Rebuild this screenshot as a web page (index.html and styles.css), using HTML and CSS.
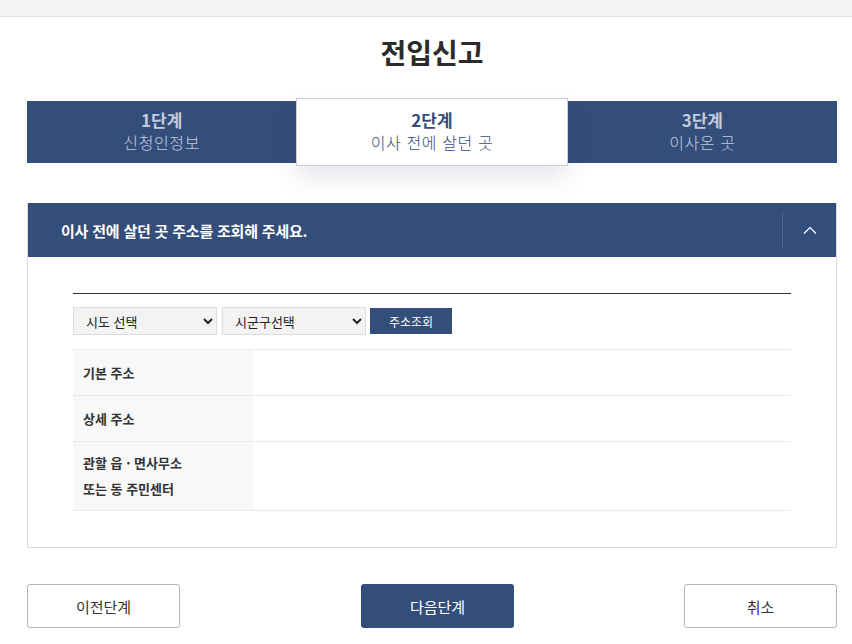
FILE: index.html
```html
<!DOCTYPE html>
<html lang="ko">
<head>
    <meta charset="UTF-8">
    <meta name="viewport" content="width=device-width, initial-scale=1.0">
    <title>전입신고</title>
    <link rel="stylesheet" href="styles.css">
</head>

<body>

<div class="top-bar"></div>

<div class="wrap">
    <h1 class="page-title">전입신고</h1>

    <div class="steps">
        <div class="step">
            <strong>1단계</strong>
            <span>신청인정보</span>
        </div>
        <div class="step active">
            <strong>2단계</strong>
            <span>이사 전에 살던 곳</span>
        </div>
        <div class="step">
            <strong>3단계</strong>
            <span>이사온 곳</span>
        </div>
    </div>

    <div class="panel">
        <div class="panel-head">
            <h2>이사 전에 살던 곳 주소를 조회해 주세요.</h2>
            <button class="toggle" type="button">
                <svg width="14" height="8" viewBox="0 0 14 8"><path d="M1 7.5 L7 1.5 L13 7.5" fill="none" stroke="#fff" stroke-width="1.2"/></svg>
            </button>
        </div>

        <div class="panel-body">
            <div class="search">
                <select class="sel">
                    <option>시도 선택</option>
                </select>
                <select class="sel">
                    <option>시군구선택</option>
                </select>
                <button class="btn-search" type="button">주소조회</button>
            </div>

            <table class="addr">
                <tr>
                    <th>기본 주소</th>
                    <td></td>
                </tr>
                <tr>
                    <th>상세 주소</th>
                    <td></td>
                </tr>
                <tr>
                    <th>관할 읍 · 면사무소<br>또는 동 주민센터</th>
                    <td></td>
                </tr>
            </table>
        </div>
    </div>

    <div class="actions">
        <button class="btn btn-line" type="button">이전단계</button>
        <button class="btn btn-primary" type="button">다음단계</button>
        <button class="btn btn-line" type="button">취소</button>
    </div>
</div>

</body>
</html>
```

FILE: styles.css
```css
/* Reset */
* {
    box-sizing: border-box;
    margin: 0;
    padding: 0;
    font-family: "Noto Sans CJK KR", "Noto Sans", sans-serif;
}

body {
    background: #fff;
    color: #333;
}

.top-bar {
    height: 17px;
    background: #f6f5f6;
    border-bottom: 1px solid #e4e4e4;
}

.wrap {
    width: 810px;
    margin-left: 27px;
}

.page-title {
    padding-top: 15px;
    font-size: 28px;
    line-height: 40px;
    font-weight: 700;
    text-align: center;
    color: #2b2b2b;
}

/* Steps */
.steps {
    display: flex;
    height: 62px;
    margin-top: 29px;
    background: #344e7b;
}

.step {
    flex: 1;
    padding-top: 8px;
    text-align: center;
    color: #c3cbdc;
}

.step strong {
    display: block;
    font-size: 17px;
    line-height: 22px;
}

.step span {
    display: block;
    font-size: 16px;
    line-height: 23px;
    font-weight: 300;
    letter-spacing: 0.6px;
}

.step.active {
    margin: -3px 0;
    padding-top: 10px;
    background: #fff;
    color: #344e7b;
    border: 1px solid #c8cdd9;
    box-shadow: 0 12px 24px rgba(40, 60, 100, 0.12);
    position: relative;
}

/* Panel */
.panel {
    margin-top: 40px;
    border: 1px solid #d9d9d9;
    border-top: none;
}

.panel-head {
    display: flex;
    align-items: center;
    height: 54px;
    background: #344e7b;
    padding-left: 33px;
}

.panel-head h2 {
    flex: 1;
    font-size: 15px;
    font-weight: 700;
    color: #fff;
    letter-spacing: -0.2px;
}

.toggle {
    width: 54px;
    height: 36px;
    background: none;
    border: none;
    border-left: 1px solid rgba(255, 255, 255, 0.15);
    display: flex;
    align-items: center;
    justify-content: center;
    cursor: pointer;
}

.panel-body {
    padding: 36px 45px 36px;
}

.search {
    display: flex;
    align-items: center;
    gap: 5px;
    padding-top: 13px;
    border-top: 1px solid #333;
}

.sel {
    width: 144px;
    height: 28px;
    padding-left: 8px;
    font-size: 13px;
    color: #222;
    background: #f3f3f3;
    border: 1px solid #dcdcdc;
}

.btn-search {
    width: 82px;
    height: 26px;
    margin-left: -1px;
    font-size: 12px;
    color: #fff;
    background: #344e7b;
    border: none;
    cursor: pointer;
}

.addr {
    width: 100%;
    margin-top: 14px;
    border-collapse: collapse;
    border-top: 1px solid #eaeaea;
}

.addr th,
.addr td {
    height: 46px;
    border-bottom: 1px solid #eaeaea;
    font-size: 13px;
    line-height: 26px;
}

.addr th {
    width: 180px;
    padding: 8px 10px;
    text-align: left;
    font-weight: 700;
    color: #333;
    background: #f8f8f8;
}

/* Footer buttons */
.actions {
    display: flex;
    justify-content: space-between;
    margin-top: 36px;
}

.btn {
    width: 153px;
    height: 44px;
    font-size: 15px;
    border-radius: 3px;
    cursor: pointer;
}

.btn-line {
    background: #fff;
    color: #333;
    border: 1px solid #b3b3b3;
}

.btn-primary {
    margin-left: 11px;
    background: #344e7b;
    color: #fff;
    border: none;
}
```
